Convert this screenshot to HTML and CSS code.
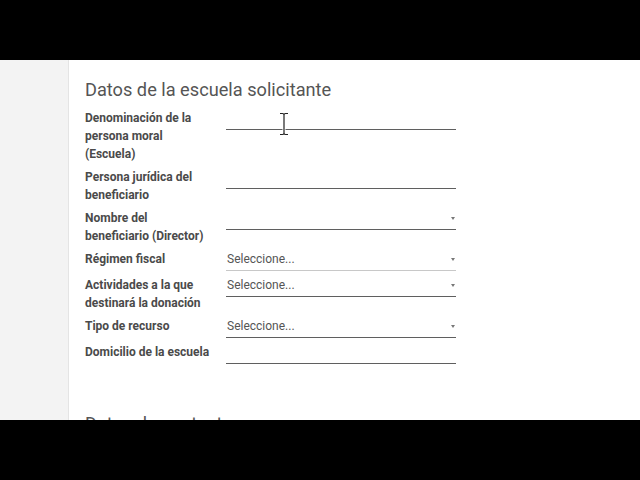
FILE: index.html
```html
<!DOCTYPE html>
<html lang="es">
<head>
<meta charset="utf-8">
<title>Datos de la escuela solicitante</title>
<link rel="stylesheet" href="styles.css">
</head>
<body>
<div class="frame">
  <div class="bar"></div>
  <div class="viewport">
    <aside class="side"></aside>
    <main class="sheet">
      <h2 class="sep">Datos de la escuela solicitante</h2>
      <div class="group">
        <label class="lbl">Denominación de la persona moral (Escuela)</label>
        <div class="field"></div>

        <label class="lbl">Persona jurídica del beneficiario</label>
        <div class="field"></div>

        <label class="lbl">Nombre del beneficiario (Director)</label>
        <div class="field select"></div>

        <label class="lbl">Régimen fiscal</label>
        <div class="field select light">Seleccione...</div>

        <label class="lbl">Actividades a la que destinará la donación</label>
        <div class="field select">Seleccione...</div>

        <label class="lbl">Tipo de recurso</label>
        <div class="field select">Seleccione...</div>

        <label class="lbl">Domicilio de la escuela</label>
        <div class="field"></div>
      </div>
      <h2 class="sep next">Datos de contacto</h2>
    </main>
    <svg class="cursor" width="12" height="24" viewBox="0 0 12 24" aria-hidden="true">
      <path d="M2 1.5 H4.5 Q6 1.5 6 3 Q6 1.5 7.5 1.5 H10 M6 3 V21 M2 22.5 H4.5 Q6 22.5 6 21 Q6 22.5 7.5 22.5 H10" fill="none" stroke="#fff" stroke-width="3" stroke-linecap="round"/>
      <path d="M2 1.5 H4.5 Q6 1.5 6 3 Q6 1.5 7.5 1.5 H10 M6 3 V21 M2 22.5 H4.5 Q6 22.5 6 21 Q6 22.5 7.5 22.5 H10" fill="none" stroke="#222" stroke-width="1.2"/>
    </svg>
  </div>
  <div class="bar"></div>
</div>
</body>
</html>
```

FILE: styles.css
```css
html, body {
  margin: 0;
  padding: 0;
  background: #000;
}

.frame {
  width: 640px;
  height: 480px;
  display: flex;
  flex-direction: column;
  background: #000;
  font-family: Roboto, "Liberation Sans", sans-serif;
}

.bar {
  height: 60px;
  background: #000;
  flex: none;
}

.viewport {
  position: relative;
  height: 360px;
  display: flex;
  overflow: hidden;
  background: #fff;
}

.side {
  width: 68px;
  flex: none;
  background: #f3f3f3;
  border-right: 1px solid #e4e4e4;
  box-shadow: 1px 0 1px rgba(0, 0, 0, 0.04);
}

.sheet {
  flex: 1;
  background: #fff;
  padding: 19px 0 0 16px;
}

.sep {
  margin: 0;
  font-size: 18.2px;
  line-height: 22px;
  font-weight: 400;
  color: #555;
  height: 22px;
}

.sep.next {
  margin-top: 49px;
}

.group {
  margin-top: 7px;
  display: grid;
  grid-template-columns: 141px 230px;
  row-gap: 4px;
  align-items: start;
}

.lbl {
  width: 128px;
  font-size: 12px;
  font-weight: 700;
  line-height: 18px;
  color: #4a4a4a;
  padding-top: 1px;
}

.field {
  position: relative;
  height: 22px;
  box-sizing: border-box;
  border-bottom: 1px solid #5f5f5f;
  font-size: 12px;
  line-height: 21px;
  color: #555;
  padding-left: 1px;
}

.field.light {
  border-bottom-color: #c8c8c8;
}

.field.select::after {
  content: "";
  position: absolute;
  right: 1px;
  top: 9px;
  border-left: 2.5px solid transparent;
  border-right: 2.5px solid transparent;
  border-top: 3px solid #777;
}

.cursor {
  position: absolute;
  left: 278px;
  top: 52px;
}
```
